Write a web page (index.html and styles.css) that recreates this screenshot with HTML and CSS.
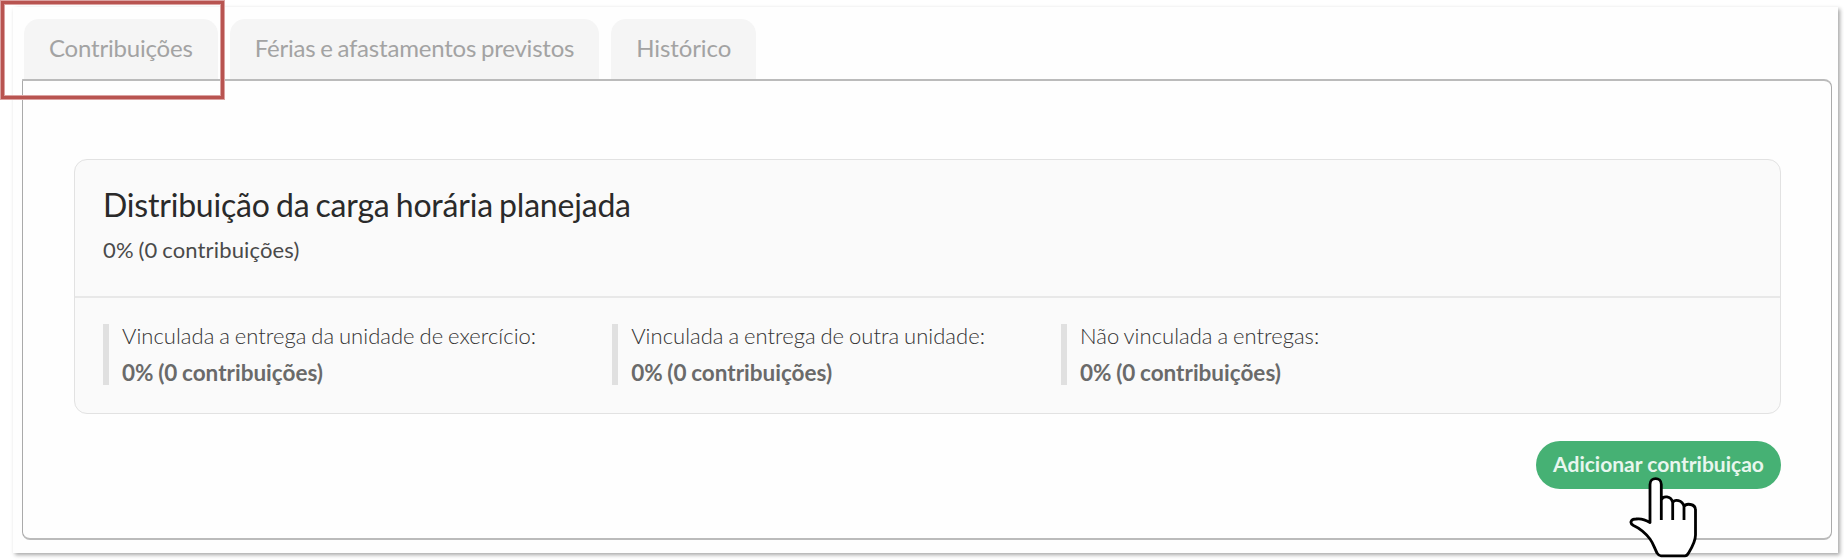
FILE: index.html
```html
<!DOCTYPE html>
<html lang="pt-BR">
<head>
    <meta charset="UTF-8">
    <meta name="viewport" content="width=device-width, initial-scale=1.0">
    <title>Contribuições</title>
    <link rel="stylesheet" href="styles.css">
</head>
<body>
    <div class="sheet">
        <div class="tabs">
            <div class="tab">Contribuições</div>
            <div class="tab">Férias e afastamentos previstos</div>
            <div class="tab">Histórico</div>
        </div>

        <div class="panel">
            <div class="card">
                <div class="card-header">
                    <h2>Distribuição da carga horária planejada</h2>
                    <p>0% (0 contribuições)</p>
                </div>
                <div class="card-body">
                    <div class="item">
                        <span>Vinculada a entrega da unidade de exercício:</span>
                        <strong>0% (0 contribuições)</strong>
                    </div>
                    <div class="item">
                        <span>Vinculada a entrega de outra unidade:</span>
                        <strong>0% (0 contribuições)</strong>
                    </div>
                    <div class="item">
                        <span>Não vinculada a entregas:</span>
                        <strong>0% (0 contribuições)</strong>
                    </div>
                </div>
            </div>
            <button class="add-button">Adicionar contribuiçao</button>
        </div>
    </div>

    <div class="highlight"></div>

    <svg class="pointer" width="70" height="82" viewBox="0 0 70 82">
        <path d="M22 46.500V8.500C22 0.700 33.300 0.700 33.300 8.500V24C35 19.500 43 19.500 44.700 26.500C46.500 23 54.500 23.500 56 30.500C58 27 67.500 27.500 67.500 34V59C67.500 66 63 73 60.500 77C59.500 79 58.500 79.800 57 79.800H33C31 79.800 30 78.500 29 77C26 71 25 67 22 63C17 56.500 11 52 5.500 49.500C1 47 3 43 8 43C14 42 18 44 22 46.500ZM33.300 22V44M44.700 26V44M56 30V44" fill="#fff" stroke="#000" stroke-width="2.800" stroke-linejoin="round"/>
    </svg>
</body>
</html>
```

FILE: styles.css
```css
* {
    box-sizing: border-box;
}
body {
    margin: 0;
    padding: 7px 6px 7px 13px;
    height: 560px;
    overflow: hidden;
    font-family: "Lato", sans-serif;
    background: #fff;
}
.sheet {
    height: 546px;
    padding: 12px 6px 0 9px;
    background: #fefefe;
    box-shadow: 2px 2px 4px rgba(0, 0, 0, 0.35);
}
.tabs {
    display: flex;
    gap: 12px;
    padding-left: 2px;
}
.tab {
    height: 60px;
    padding: 0 25px;
    line-height: 57px;
    font-size: 24px;
    letter-spacing: -0.2px;
    word-spacing: -1.2px;
    color: #a3a3a3;
    background: #f5f5f5;
    border-radius: 15px 15px 0 0;
}
.tab:last-child {
    letter-spacing: -0.1px;
}
.panel {
    display: flex;
    flex-direction: column;
    align-items: flex-end;
    height: 461px;
    padding: 78px 50px 0 51px;
    border: 1px solid #aaa;
    border-top: 2px solid #bbb;
    border-bottom: 2px solid #bbb;
    border-radius: 0 8px 8px 8px;
}
.card {
    width: 100%;
    height: 255px;
    background: #fafafa;
    border: 1px solid #e2e2e2;
    border-radius: 13px;
}
.card-header {
    height: 138px;
    padding: 25px 28px 0;
    border-bottom: 2px solid #e8e8e8;
}
.card-header h2 {
    margin: 0;
    font-size: 32px;
    font-weight: 400;
    line-height: 40px;
    letter-spacing: -0.2px;
    word-spacing: -1.8px;
    color: #2a2a2a;
}
.card-header p {
    margin: 9px 0 0;
    font-size: 22px;
    line-height: 32px;
    letter-spacing: 0.15px;
    word-spacing: -1px;
    color: #4a4a4a;
}
.card-body {
    display: flex;
    gap: 76px;
    padding: 26px 28px 0;
}
.item {
    display: flex;
    flex-direction: column;
    height: 61px;
    padding-left: 13px;
    border-left: 6px solid #e0e0e0;
    font-size: 22px;
    white-space: nowrap;
}
.item span {
    height: 36px;
    line-height: 24px;
    font-weight: 300;
    letter-spacing: 0.02px;
    word-spacing: -1.1px;
    color: #333;
}
.item strong {
    font-size: 22.5px;
    line-height: 25px;
    word-spacing: -0.8px;
    color: #6a6a6a;
}
.add-button {
    width: 245px;
    height: 48px;
    margin-top: 27px;
    padding: 0 0 3px;
    border: none;
    border-radius: 24px;
    font-family: inherit;
    font-size: 21px;
    font-weight: 700;
    color: #e8f6ee;
    background: #46b174;
    white-space: nowrap;
}
/* red frame around the first tab */
.highlight {
    position: absolute;
    left: 0;
    top: 0;
    width: 225px;
    height: 100px;
    border: 5px solid #dba2a1;
}
.highlight::before {
    content: "";
    position: absolute;
    inset: -4px;
    border: 3px solid #b85450;
}
.pointer {
    position: absolute;
    left: 1628px;
    top: 476px;
}
```
